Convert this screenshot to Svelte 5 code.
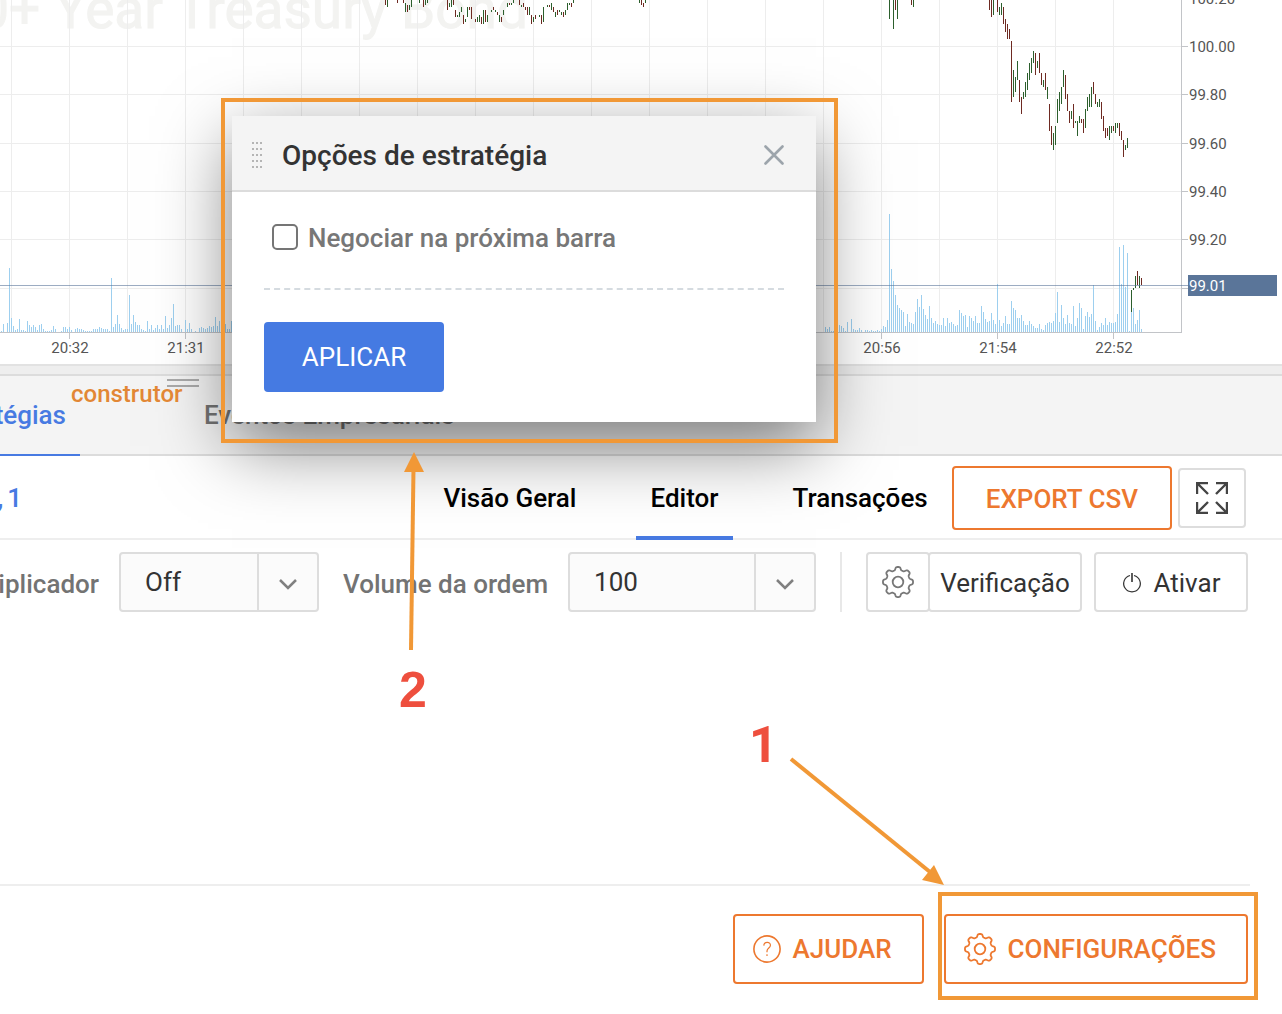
<script>
	// price bars: x, top, bottom, g (up) or r (down)
	const priceData = `385,0,5,r 387,0,7,g 397,0,3,r 403,0,3,r 405,3,12,g 407,5,12,r 409,5,10,g 411,0,7,g 419,0,3,g
		423,0,7,r 425,0,5,g 427,0,3,g 447,0,10,r 449,3,7,g 451,0,7,g 453,0,5,r 455,10,17,r 457,15,17,g 459,12,17,g
		461,7,12,g 463,15,24,r 465,19,22,g 467,7,17,g 469,7,10,r 471,7,19,r 475,19,22,r 477,17,22,g 479,15,22,g
		481,17,24,r 483,10,24,g 485,10,22,r 487,15,22,g 491,10,12,g 493,7,10,r 495,10,12,g 497,12,15,r 499,15,22,g
		501,17,22,r 503,10,15,g 507,3,7,g 509,3,5,r 511,3,5,g 513,0,3,g 519,0,5,r 521,5,7,g 523,3,7,r 525,7,10,r
		527,7,15,r 529,7,15,g 531,15,24,r 533,17,22,g 535,15,19,r 539,15,17,g 541,15,24,r 543,7,22,g 547,5,7,g
		549,5,7,r 551,3,10,g 553,7,12,r 555,12,17,g 557,10,15,r 559,10,12,g 561,12,15,g 563,12,17,r 565,10,15,g
		567,3,10,g 569,3,5,g 571,3,7,r 573,0,3,g 639,0,3,g 641,0,5,r 643,3,7,r 645,0,3,g
		889,0,19,g 893,0,29,g 895,0,10,r 897,0,19,g 911,0,5,r 913,0,7,g 989,0,10,r 991,0,17,r 993,0,15,g
		997,0,12,r 999,7,15,g 1001,3,15,g 1003,7,24,r 1005,19,32,r 1007,24,39,r 1009,29,39,r 1011,41,102,r
		1013,70,97,g 1015,77,92,g 1017,61,80,g 1019,80,102,r 1021,97,114,r 1023,92,99,g 1025,82,97,g 1027,73,90,g
		1029,63,80,g 1031,58,73,g 1033,51,63,g 1035,53,75,r 1037,61,68,g 1039,53,73,r 1041,73,85,r 1043,80,87,g
		1045,73,90,r 1047,87,99,g 1049,104,131,r 1051,126,145,r 1053,133,150,g 1055,126,145,g 1057,99,123,g
		1059,92,111,g 1061,87,104,g 1063,70,87,g 1065,75,99,r 1067,94,111,r 1069,111,123,r 1071,111,119,g
		1073,104,128,r 1075,121,123,g 1077,121,136,g 1079,116,123,g 1081,119,123,r 1083,119,133,r 1085,109,128,g
		1087,97,111,g 1089,94,107,g 1091,87,107,g 1093,82,94,r 1095,94,104,r 1097,102,107,g 1099,99,107,g
		1101,102,119,r 1103,116,131,r 1105,128,138,r 1107,128,136,r 1109,126,140,g 1111,126,133,g 1113,126,131,r
		1115,123,133,g 1117,123,128,g 1119,123,136,r 1121,131,140,r 1123,140,157,r 1125,145,150,g 1127,138,148,g
		1131,290,312,g 1133,288,290,g 1135,276,288,g 1137,271,285,r 1139,276,288,g 1141,278,285,r`;

	const prices = priceData.split(/\s+/).map((p) => {
		const [x, top, bottom, dir] = p.split(',');
		return { x: +x, y: +top, h: bottom - top, dir };
	});

	// volume bars, one every 2px
	const volumeLeft = [
		1, 8, 0, 9, 64, 14, 6, 2, 3, 13, 2, 2, 1, 11, 7, 5, 7, 5, 2, 7, 8, 3, 1, 1, 1, 2, 6, 3, 0, 0, 1, 5, 5, 3, 5, 2, 0,
		3, 4, 3, 3, 2, 1, 1, 1, 1, 3, 3, 3, 5, 4, 3, 3, 3, 1, 54, 5, 8, 17, 8, 4, 2, 3, 3, 37, 8, 17, 10, 7, 7, 3, 2, 1,
		11, 3, 7, 2, 4, 7, 3, 7, 3, 16, 4, 7, 14, 28, 6, 7, 7, 3, 0, 12, 3, 9, 3, 0, 1, 0, 4, 5, 4, 3, 4, 6, 5, 6, 15, 6,
		11, 4, 6, 8, 3, 3, 11
	];
	const volumeRight = [
		5, 3, 5, 1, 1, 3, 4, 7, 6, 4, 1, 10, 0, 13, 3, 2, 2, 4, 2, 0, 2, 2, 1, 2, 1, 1, 2, 1, 3, 6, 5, 12, 118, 63, 51, 37,
		27, 24, 22, 20, 6, 18, 10, 9, 8, 20, 33, 25, 37, 23, 17, 13, 26, 14, 9, 11, 8, 7, 7, 14, 6, 14, 9, 10, 8, 6, 7, 22,
		19, 16, 17, 5, 16, 14, 11, 16, 9, 9, 26, 20, 13, 10, 11, 19, 12, 8, 48, 12, 6, 9, 16, 8, 8, 31, 24, 22, 14, 14, 17,
		11, 7, 7, 11, 8, 6, 4, 4, 8, 3, 2, 7, 9, 10, 9, 11, 19, 40, 10, 27, 14, 8, 17, 9, 8, 26, 6, 14, 29, 24, 3, 16, 20,
		15, 18, 47, 11, 2, 5, 9, 7, 14, 7, 10, 9, 9, 10, 18, 85, 48, 87, 45, 79, 1, 20, 24, 8, 12, 22, 3
	];
	const volumes = [
		...volumeLeft.map((h, i) => ({ x: 1 + i * 2, h })),
		...volumeRight.map((h, i) => ({ x: 825 + i * 2, h }))
	];

	const columns = Array.from({ length: 20 }, (_, i) => 11 + i * 58);
	const priceTicks = [
		{ y: -2, label: '100.20' },
		{ y: 46, label: '100.00' },
		{ y: 94, label: '99.80' },
		{ y: 143, label: '99.60' },
		{ y: 191, label: '99.40' },
		{ y: 239, label: '99.20' },
		{ y: 288, label: '' }
	];
	const timeTicks = [
		{ x: 69, label: '20:32' },
		{ x: 185, label: '21:31' },
		{ x: 881, label: '20:56' },
		{ x: 997, label: '21:54' },
		{ x: 1113, label: '22:52' }
	];

	// cog outline with eight rounded teeth
	let cog = '';
	for (let i = 0; i < 160; i++) {
		const a = (i / 160) * Math.PI * 2;
		const r = 13.5 + 1.6 * Math.tanh(Math.cos(a * 8) * 2);
		cog += (i ? 'L' : 'M') + (16 + r * Math.sin(a)).toFixed(2) + ' ' + (16 - r * Math.cos(a)).toFixed(2);
	}
	cog += 'Z';

	let showOptions = true;
	let nextBar = false;
	let tab = 'Editor';
	const tabs = ['Visão Geral', 'Editor', 'Transações'];
</script>

<div class="page">
	<section class="chart">
		<svg width="1282" height="364">
			<text class="watermark" x="528" y="28" text-anchor="end">0+ Year Treasury Bond</text>
			{#each columns as x}
				<rect class="grid" {x} y="0" width="1" height="332" />
			{/each}
			{#each priceTicks as t}
				<rect class="grid" x="0" y={t.y} width="1181" height="1" />
				<rect class="axis" x="1182" y={t.y} width="6" height="1" />
				<text class="tick" x="1189" y={t.y + 6}>{t.label}</text>
			{/each}
			{#each volumes as v}
				<rect class="volume" x={v.x} y={332 - v.h} width="1" height={v.h} />
			{/each}
			{#each prices as p}
				<rect class={p.dir === 'g' ? 'up' : 'down'} x={p.x} y={p.y} width="1" height={p.h} />
			{/each}
			<rect class="axis" x="0" y="332" width="1182" height="1" />
			<rect class="axis" x="1181" y="0" width="1" height="333" />
			{#each timeTicks as t}
				<rect class="axis" x={t.x} y="333" width="1" height="6" />
				<text class="tick" x={t.x + 1} y="353" text-anchor="middle">{t.label}</text>
			{/each}
			<rect class="current" x="0" y="285" width="1188" height="1" />
			<rect class="current-label" x="1188" y="275" width="89" height="21" />
			<text class="tick current-text" x="1189" y="291">99.01</text>
		</svg>
	</section>

	<div class="splitter"></div>

	<nav class="main-tabs">
		<span class="handle"></span>
		<button class="main-tab active">tégias</button>
		<button class="main-tab">Eventos Empresariais</button>
	</nav>

	<div class="strategy">
		<div class="strategy-name"><span>,</span><span>1</span></div>
		<nav class="tabs">
			{#each tabs as t}
				<button class="tab" class:selected={tab === t} on:click={() => (tab = t)}>{t}</button>
			{/each}
		</nav>
		<button class="outline export">EXPORT CSV</button>
		<button class="plain fullscreen" aria-label="Tela cheia">
			<svg width="32" height="32" viewBox="0 0 32 32" fill="none" stroke="#444" stroke-width="2.4">
				<path d="M1 12V1h11M1 1l11 11M20 1h11v11M31 1L20 12M1 20v11h11M1 31l11-11M20 31h11V20M31 31L20 20" />
			</svg>
		</button>
	</div>

	<div class="controls">
		<label class="multiplier" for="multiplier">iplicador</label>
		<div class="select small">
			<select id="multiplier">
				<option>Off</option>
			</select>
			<span class="arrow">
				<svg width="20" height="12" viewBox="0 0 20 12" fill="none" stroke="#808080" stroke-width="2.5">
					<path d="M2 2l8 8 8-8" />
				</svg>
			</span>
		</div>
		<label class="volume-label" for="volume">Volume da ordem</label>
		<div class="select">
			<select id="volume">
				<option>100</option>
			</select>
			<span class="arrow">
				<svg width="20" height="12" viewBox="0 0 20 12" fill="none" stroke="#808080" stroke-width="2.5">
					<path d="M2 2l8 8 8-8" />
				</svg>
			</span>
		</div>
		<span class="divider"></span>
		<div class="group">
			<button class="plain cog" aria-label="Opções">
				<svg width="32" height="32" viewBox="0 0 32 32" fill="none" stroke="#777" stroke-width="1.8">
					<path d={cog} />
					<circle cx="16" cy="16" r="5.3" />
				</svg>
			</button>
			<button class="plain action">Verificação</button>
		</div>
		<button class="plain action activate">
			<svg width="20" height="22" viewBox="0 0 20 22" fill="none" stroke="#333" stroke-width="1.2">
				<path d="M8 3.500a8.300 8.300 0 1 0 4 0" />
				<path d="M10 1v9" stroke-width="1.6" />
			</svg>
			Ativar
		</button>
	</div>

	<div class="canvas"></div>

	<footer>
		<button class="outline">
			<svg width="28" height="28" viewBox="0 0 28 28" fill="none" stroke="#ed782f" stroke-width="1.6">
				<circle cx="14" cy="14" r="13.1" />
				<path d="M10.800 10.600c.2-4.600 7-4.200 6.600-.1-.2 2.500-3.400 2.600-3.400 5.600v1.200M14 19.200v1.800" stroke-width="1.2" />
			</svg>
			AJUDAR
		</button>
		<button class="outline" on:click={() => (showOptions = true)}>
			<svg width="32" height="32" viewBox="0 0 32 32" fill="none" stroke="#ed782f" stroke-width="1.8">
				<path d={cog} />
				<circle cx="16" cy="16" r="5.3" />
			</svg>
			CONFIGURAÇÕES
		</button>
	</footer>

	{#if showOptions}
		<div class="modal" role="dialog" aria-labelledby="modal-title">
			<header>
				<svg class="drag" width="10" height="26" fill="#b5b5b5">
					{#each [0, 6, 12, 18, 24] as y}
						{#each [0, 4, 8] as x}
							<rect {x} {y} width="2" height="2" />
						{/each}
					{/each}
				</svg>
				<h2 id="modal-title">Opções de estratégia</h2>
				<button class="close" aria-label="Fechar" on:click={() => (showOptions = false)}>
					<svg width="20" height="20" viewBox="0 0 20 20" stroke="#9ca4ab" stroke-width="2.6" stroke-linecap="round">
						<path d="M1.500 1.500l17 17M18.500 1.500l-17 17" />
					</svg>
				</button>
			</header>
			<div class="modal-body">
				<label class="check">
					<input type="checkbox" bind:checked={nextBar} />
					Negociar na próxima barra
				</label>
				<div class="dashes"></div>
				<button class="apply">APLICAR</button>
			</div>
		</div>
	{/if}

	<span class="note">construtor</span>
	<div class="frame frame-modal"></div>
	<div class="frame frame-settings"></div>
	<svg class="arrows" width="1282" height="1014">
		<g stroke="#f19836" stroke-width="4">
			<path d="M411 650L413.500 468" />
			<path d="M791 759L930 872" />
		</g>
		<path fill="#f19836" d="M414 452l10 20h-20zM944 885l-22-5 12-15z" />
		<text class="step" x="399" y="707">2</text>
		<text class="step narrow" x="749" y="762">1</text>
	</svg>
</div>

<style>
	:global(body) {
		margin: 0;
		background: #fff;
	}

	.page {
		position: relative;
		display: flex;
		flex-direction: column;
		min-height: 100vh;
		overflow: hidden;
		font-family: Roboto, "Liberation Sans", sans-serif;
		font-size: 26px;
		line-height: 32px;
		color: #333;
	}

	button,
	select {
		font: inherit;
		color: inherit;
		margin: 0;
		cursor: pointer;
	}

	svg {
		display: block;
		flex: none;
	}

	.chart {
		height: 364px;
		overflow: hidden;
	}

	.watermark {
		font-size: 55px;
		fill: #f3f3f1;
		stroke: #f3f3f1;
	}

	.grid {
		fill: #ededed;
	}

	.axis {
		fill: #c2c4c8;
	}

	.tick {
		font-size: 15px;
		fill: #555;
	}

	.volume {
		fill: #9dcfef;
	}

	.up {
		fill: #2c5f2d;
	}

	.down {
		fill: #6e2a22;
	}

	.current {
		fill: #5a7599;
		opacity: 0.6;
	}

	.current-label {
		fill: #5a7599;
	}

	.current-text {
		fill: #fff;
	}

	.splitter {
		height: 8px;
		background: #eee;
		border-top: 2px solid #e2e2e2;
		border-bottom: 2px solid #dcdcdc;
	}

	.main-tabs {
		position: relative;
		display: flex;
		height: 78px;
		background: #f4f4f4;
		border-bottom: 2px solid #dcdcdc;
	}

	.handle {
		position: absolute;
		left: 167px;
		top: 3px;
		width: 32px;
		height: 4px;
		border-top: 2px solid #aaa;
		border-bottom: 2px solid #aaa;
	}

	.main-tab {
		height: 80px;
		padding: 0 14px;
		border: 0;
		border-bottom: 2px solid transparent;
		background: none;
		font-weight: 500;
		color: #737373;
	}

	.main-tab + .main-tab {
		margin-left: 110px;
	}

	.main-tab.active {
		display: flex;
		align-items: center;
		justify-content: flex-end;
		width: 80px;
		color: #477ae2;
		border-bottom-color: #477ae2;
	}

	.strategy {
		display: flex;
		align-items: center;
		box-sizing: border-box;
		height: 84px;
		padding: 2px 36px 0 0;
		border-bottom: 2px solid #eee;
	}

	.strategy-name {
		display: flex;
		justify-content: flex-end;
		gap: 4px;
		width: 22px;
		font-weight: 500;
		color: #477ae2;
	}

	.tabs {
		display: flex;
		gap: 46px;
		margin-left: auto;
		margin-right: 10px;
	}

	.tab {
		height: 82px;
		margin-bottom: -2px;
		padding: 2px 14px 0;
		border: 0;
		border-bottom: 4px solid transparent;
		background: none;
		font-weight: 500;
		color: #000;
	}

	.tab.selected {
		border-bottom-color: #477ae2;
	}

	.outline {
		display: flex;
		align-items: center;
		gap: 12px;
		height: 70px;
		padding: 0 30px 0 18px;
		border: 2px solid #ed782f;
		border-radius: 4px;
		background: #fff;
		font-weight: 500;
		color: #ed782f;
	}

	.export {
		height: 64px;
		margin-right: 6px;
		padding: 2px 32px 0;
	}

	.plain {
		display: flex;
		align-items: center;
		justify-content: center;
		height: 60px;
		padding: 0;
		border: 2px solid #ddd;
		border-radius: 4px;
		background: #fff;
	}

	.fullscreen {
		width: 68px;
	}

	.controls {
		display: flex;
		align-items: center;
		height: 60px;
		padding: 12px 34px 12px 0;
	}

	.controls label {
		padding-top: 4px;
		font-weight: 500;
		color: #737373;
		white-space: nowrap;
	}

	.multiplier {
		display: flex;
		justify-content: flex-end;
		width: 99px;
	}

	.volume-label {
		margin-left: 24px;
	}

	.select {
		display: flex;
		box-sizing: border-box;
		width: 248px;
		height: 60px;
		margin-left: 20px;
		border: 2px solid #ddd;
		border-radius: 4px;
		background: #fbfbfb;
	}

	.select.small {
		width: 200px;
	}

	select {
		flex: 1;
		min-width: 0;
		padding: 0 0 0 24px;
		border: 0;
		background: none;
		appearance: none;
	}

	.arrow {
		display: flex;
		align-items: center;
		justify-content: center;
		width: 58px;
		padding-top: 4px;
		border-left: 2px solid #ddd;
		pointer-events: none;
	}

	.divider {
		width: 2px;
		height: 60px;
		margin: 0 24px;
		background: #e8e8e8;
	}

	.group {
		display: flex;
		margin-right: 12px;
	}

	.cog {
		width: 64px;
	}

	.action {
		width: 154px;
		padding-top: 2px;
	}

	.group .action {
		margin-left: -2px;
	}

	.activate {
		gap: 12px;
	}

	.canvas {
		flex: 1;
		margin-right: 32px;
		border-bottom: 2px solid #eee;
	}

	footer {
		display: flex;
		justify-content: flex-end;
		gap: 20px;
		padding: 28px 34px 30px;
	}

	.modal {
		position: absolute;
		left: 232px;
		top: 116px;
		width: 584px;
		background: #fff;
		box-shadow: 0 24px 68px rgba(0, 0, 0, 0.5);
	}

	.modal header {
		display: flex;
		align-items: center;
		box-sizing: border-box;
		height: 76px;
		padding: 4px 32px 0 20px;
		background: #f4f4f4;
		border-bottom: 2px solid #dcdcdc;
	}

	.drag {
		margin-right: 20px;
	}

	h2 {
		flex: 1;
		margin: 0;
		padding-top: 2px;
		font-size: 28px;
		font-weight: 500;
	}

	.close {
		padding: 0;
		border: 0;
		background: none;
	}

	.modal-body {
		padding: 30px 32px;
	}

	.check {
		display: flex;
		align-items: center;
		gap: 10px;
		margin-left: 8px;
		font-weight: 500;
		color: #777;
	}

	.check input {
		appearance: none;
		width: 26px;
		height: 26px;
		margin: 0 0 2px;
		border: 2px solid #757575;
		border-radius: 5px;
		background: #fff;
	}

	.check input:checked {
		background: #457ae2;
	}

	.dashes {
		margin: 34px 0 32px;
		border-top: 2px dashed #d5dbe0;
	}

	.apply {
		display: block;
		width: 180px;
		height: 70px;
		padding: 0;
		border: 0;
		border-radius: 4px;
		background: #457ae2;
		color: #fff;
	}

	.note {
		position: absolute;
		left: 71px;
		top: 378px;
		font-size: 24px;
		font-weight: 500;
		color: #e28735;
	}

	.frame {
		position: absolute;
		box-sizing: border-box;
		border: 4px solid #f19836;
		pointer-events: none;
	}

	.frame-modal {
		left: 221px;
		top: 98px;
		width: 617px;
		height: 345px;
	}

	.frame-settings {
		right: 24px;
		bottom: 14px;
		width: 320px;
		height: 108px;
	}

	.arrows {
		position: absolute;
		left: 0;
		top: 0;
		pointer-events: none;
	}

	.step {
		font-family: "Liberation Sans", Arial, sans-serif;
		font-size: 50px;
		font-weight: 700;
		fill: #ee4f3e;
	}

	.step.narrow {
		font-family: Roboto, sans-serif;
	}
</style>
